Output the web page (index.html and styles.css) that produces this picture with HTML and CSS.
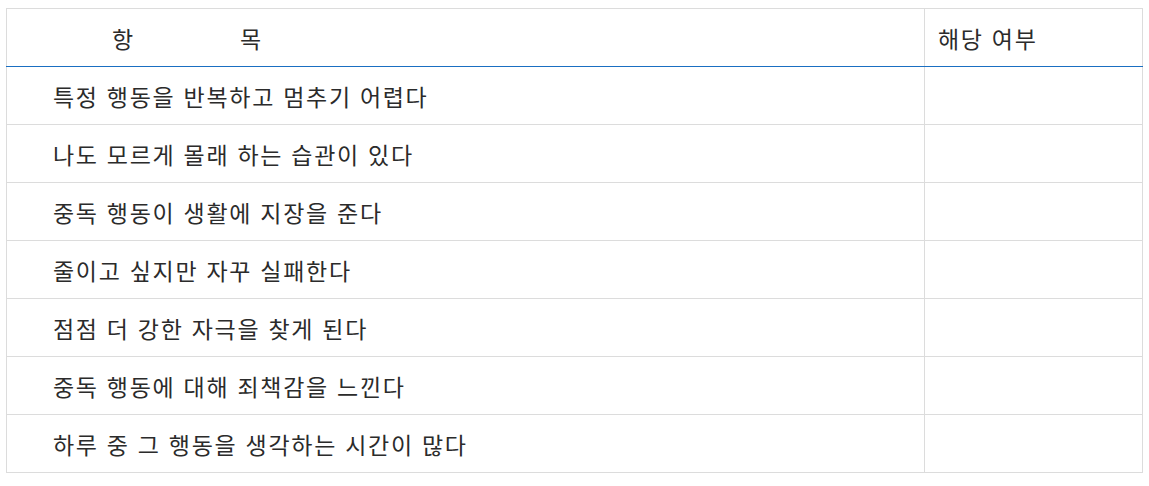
FILE: index.html
```html
<!DOCTYPE html>
<html lang="ko">
<head>
<meta charset="utf-8">
<link rel="stylesheet" href="styles.css">
</head>
<body>
<table class="check">
  <thead>
    <tr>
      <th class="col-item"><span class="h1">항</span><span class="h2">목</span></th>
      <th class="col-yes">해당 여부</th>
    </tr>
  </thead>
  <tbody>
    <tr><td class="item">특정 행동을 반복하고 멈추기 어렵다</td><td></td></tr>
    <tr><td class="item">나도 모르게 몰래 하는 습관이 있다</td><td></td></tr>
    <tr><td class="item">중독 행동이 생활에 지장을 준다</td><td></td></tr>
    <tr><td class="item">줄이고 싶지만 자꾸 실패한다</td><td></td></tr>
    <tr><td class="item">점점 더 강한 자극을 찾게 된다</td><td></td></tr>
    <tr><td class="item">중독 행동에 대해 죄책감을 느낀다</td><td></td></tr>
    <tr><td class="item">하루 중 그 행동을 생각하는 시간이 많다</td><td></td></tr>
  </tbody>
</table>
</body>
</html>
```

FILE: styles.css
```css
html, body {
  background: #fff;
}
body {
  margin: 8px 6px;
  font-family: "Noto Sans CJK KR", "Noto Sans", sans-serif;
  color: #2b2b2b;
}
.check {
  width: 1137px;
  border-collapse: collapse;
  table-layout: fixed;
  font-size: 23px;
  letter-spacing: 1.7px;
}
.check th, .check td {
  border: 1px solid #dcdcdc;
  height: 57px;
  padding: 0;
  font-weight: normal;
  text-align: left;
  vertical-align: middle;
}
.check thead th {
  border-bottom: 1px solid #1a6fc2;
}
.col-item {
  width: 917px;
}
.h1 {
  padding-left: 105px;
}
.h2 {
  padding-left: 105px;
}
.col-yes {
  padding-left: 13px !important;
}
.item {
  padding-left: 46px !important;
}
```
